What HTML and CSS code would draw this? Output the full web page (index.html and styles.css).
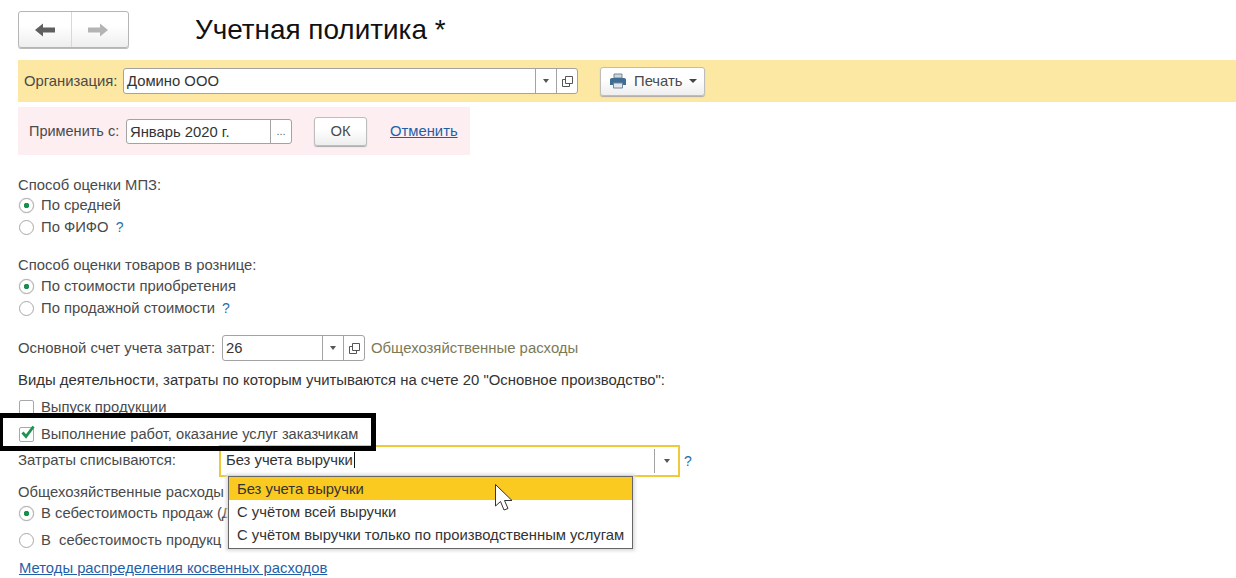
FILE: index.html
```html
<!DOCTYPE html>
<html lang="ru">
<head>
<meta charset="utf-8">
<title>Учетная политика</title>
<link rel="stylesheet" href="styles.css">
</head>
<body>
<div class="page">
  <header class="top">
    <div class="nav">
      <span class="nav-btn"><svg width="24" height="16" viewBox="0 0 24 16"><path d="M2 8 10 1.500V5.500H22V10.500H10V14.500Z" fill="#5f5f5f"/></svg></span>
      <span class="nav-btn next"><svg width="24" height="16" viewBox="0 0 24 16"><path d="M23 8 15 1.500V5.500H3V10.500H15V14.500Z" fill="#b4b4b4"/></svg></span>
    </div>
    <h1 class="title">Учетная политика *</h1>
  </header>

  <section class="org">
    <span class="org-label">Организация:</span>
    <div class="field org-field">
      <span class="value">Домино ООО</span>
      <span class="fbtn"><i class="caret"></i></span>
      <span class="fbtn"><svg width="11" height="11" viewBox="0 0 11 11"><path d="M3.500 .5H10.500V7.500H3.500Z M3.500 3.500H.5V10.500H7.500V7.500" fill="none" stroke="#555"/></svg></span>
    </div>
    <button class="print">
      <svg width="18" height="16" viewBox="0 0 18 16"><path d="M5 1h8v4H5z" fill="#cfd6dc" stroke="#7b8794"/><path d="M1 6.500Q1 5 3 5h12q2 0 2 1.500V12h-3v-2H4v2H1z" fill="#3f6d94"/><path d="M4.500 10h9v5h-9z" fill="#e4e8ec" stroke="#6f8aa0"/></svg>
      <span>Печать</span><i class="caret dark"></i>
    </button>
  </section>

  <section class="apply">
    <span class="apply-label">Применить с:</span>
    <div class="field date-field">
      <span class="value">Январь 2020 г.</span>
      <span class="fbtn dots">...</span>
    </div>
    <button class="ok">ОК</button>
    <a class="link cancel" href="#">Отменить</a>
  </section>

  <main class="form">
    <div class="row gap-20">Способ оценки МПЗ:</div>
    <div class="row"><i class="radio on"></i>По средней</div>
    <div class="row gap-2"><i class="radio"></i>По ФИФО<b class="help">?</b></div>

    <div class="row gap-18">Способ оценки товаров в рознице:</div>
    <div class="row gap-1"><i class="radio on"></i>По стоимости приобретения</div>
    <div class="row gap-2"><i class="radio"></i>По продажной стоимости<b class="help">?</b></div>

    <div class="row account">
      <span class="account-label">Основной счет учета затрат:</span>
      <div class="field account-field">
        <span class="value">26</span>
        <span class="fbtn"><i class="caret"></i></span>
        <span class="fbtn"><svg width="11" height="11" viewBox="0 0 11 11"><path d="M3.500 .5H10.500V7.500H3.500Z M3.500 3.500H.5V10.500H7.500V7.500" fill="none" stroke="#555"/></svg></span>
      </div>
      <span class="olive">Общехозяйственные расходы</span>
    </div>
    <div class="row gap-9 strong activity">Виды деятельности, затраты по которым учитываются на счете 20 "Основное производство":</div>
    <div class="row gap-7"><i class="check"></i>Выпуск продукции</div>
    <div class="row gap-7 works"><i class="check"><svg width="17" height="16" viewBox="0 0 17 16"><path d="M3.500 7.500 7 11.500 14.500 1.500" fill="none" stroke="#1f9254" stroke-width="2.800"/></svg></i>Выполнение работ, оказание услуг заказчикам</div>
    <div class="row costs">
      <span class="costs-label">Затраты списываются:</span>
      <div class="focus-field">
        <span class="value strong">Без учета выручки<i class="text-cursor"></i></span>
        <span class="focus-btn"><i class="caret"></i></span>
      </div>
      <b class="help">?</b>
    </div>
    <div class="row gap-5">Общехозяйственные расходы</div>
    <div class="row gap-1"><i class="radio on"></i>В себестоимость продаж (Д</div>
    <div class="row gap-7"><i class="radio"></i>В&nbsp; себестоимость продукц</div>
    <div class="row gap-8 methods"><a class="link" href="#">Методы распределения косвенных расходов</a></div>
  </main>

  <div class="highlight"></div>
  <ul class="dropdown">
    <li class="selected">Без учета выручки</li>
    <li>С учётом всей выручки</li>
    <li>С учётом выручки только по производственным услугам</li>
  </ul>
  <svg class="pointer" width="20" height="30" viewBox="0 0 20 30"><path d="M1.500 1.500V23L6.500 18.500 10 27 14 25.500 10.500 17.500H18Z" fill="#fff" stroke="#333" stroke-width="1"/></svg>
</div>
</body>
</html>
```
FILE: styles.css
```css
* { box-sizing: border-box; }
html, body { margin: 0; padding: 0; background: #fff; }
.page {
  position: relative;
  width: 1236px;
  height: 578px;
  overflow: hidden;
  font: 14.8px/20px "Liberation Sans", Arial, sans-serif;
  color: #4a4a4a;
}
.top { display: flex; align-items: center; height: 60px; padding: 0 0 2px 18px; }
.nav {
  display: flex;
  width: 111px;
  height: 37px;
  margin-top: 1px;
  border: 1px solid #b5b5b5;
  border-radius: 3px;
  background: linear-gradient(#fff 40%, #eeeeee);
  box-shadow: 0 1px 0 #bbb;
}
.nav-btn { flex: 1; display: flex; align-items: center; justify-content: center; }
.nav-btn.next { border-left: 1px solid #d8d8d8; padding-right: 5px; }
.title { margin: 2px 0 0 66px; font-size: 27.9px; font-weight: 400; line-height: 32px; color: #111; }
.org {
  display: flex;
  align-items: center;
  height: 42px;
  margin-left: 18px;
  padding-left: 6px;
  background: #fce8a2;
}
.org-label { width: 99px; }
.field {
  display: flex;
  align-items: stretch;
  background: #fff;
  border: 1px solid #a3a3a3;
  border-radius: 3px;
  color: #333;
}
.value { flex: 1; padding-left: 3px; line-height: 24px; white-space: nowrap; }
.fbtn {
  display: flex;
  align-items: center;
  justify-content: center;
  width: 21px;
  border-left: 1px solid #a3a3a3;
}
.org-field { width: 455px; height: 26px; }
.caret {
  display: block;
  width: 0;
  height: 0;
  border: 3px solid transparent;
  border-top: 4px solid #555;
  border-bottom: 0;
}
.caret.dark { border-width: 4px 4px 0; border-top-color: #444; }
.print {
  display: flex;
  align-items: center;
  gap: 7px;
  width: 105px;
  height: 29px;
  margin-left: 22px;
  padding: 0 0 0 8px;
  border: 1px solid #bdbdbd;
  border-radius: 3px;
  background: linear-gradient(#fff 40%, #eee);
  box-shadow: 0 1px 1px #aaa;
  font: inherit;
  color: #4a4a4a;
}
.apply {
  display: flex;
  align-items: center;
  width: 452px;
  height: 48px;
  margin: 5px 0 0 18px;
  padding-left: 11px;
  background: #fdeef1;
}
.apply-label { width: 97px; font-size: 14.5px; }
.date-field { width: 166px; height: 25px; }
.date-field .fbtn { width: 21px; }
.dots { font-size: 11px; color: #666; }
.ok {
  width: 53px;
  height: 29px;
  margin-left: 22px;
  padding: 0;
  border: 1px solid #bdbdbd;
  border-radius: 3px;
  background: linear-gradient(#fff 40%, #eee);
  box-shadow: 0 1px 1px #aaa;
  font: inherit;
  color: #4a4a4a;
}
.link { color: #1f5fa8; text-decoration: underline; }
.cancel { margin-left: 23px; }
.form { padding-left: 18px; }
.row { display: flex; align-items: center; height: 20px; white-space: nowrap; }
.gap-1 { margin-top: 1px; }
.gap-2 { margin-top: 2px; }
.gap-5 { margin-top: 5px; }
.gap-7 { margin-top: 7px; }
.gap-8 { margin-top: 8px; }
.gap-9 { margin-top: 9px; }
.gap-18 { margin-top: 18px; }
.gap-20 { margin-top: 20px; }
.strong { color: #333; }
.activity { font-size: 14.9px; }
.works { font-size: 14.65px; }
.methods { padding-left: 1px; }
.radio {
  flex: none;
  position: relative;
  width: 15px;
  height: 15px;
  margin: 0 7px 0 1px;
  border: 1px solid #a8a8a8;
  border-radius: 50%;
  background: #fff;
}
.radio.on { background: radial-gradient(circle, #1a8f4f 0 2.500px, #fff 3px); box-shadow: 0 0 1px #aaa; }
.check {
  flex: none;
  position: relative;
  width: 15px;
  height: 15px;
  margin: 0 7px 0 1px;
  border: 1px solid #a8a8a8;
  border-radius: 2px;
  background: #fff;
}
.check svg { position: absolute; left: -1px; top: -3px; }
.help { margin-left: 7px; color: #1f6fa8; font-weight: 400; font-size: 14px; }
.account { height: 26px; margin-top: 17px; }
.account-label { width: 204px; font-size: 14.9px; }
.account-field { width: 143px; height: 26px; }
.olive { margin-left: 6px; color: #7c7a55; font-size: 14.9px; }
.costs { height: 32px; margin-top: 1px; }
.costs-label { width: 201px; padding-bottom: 2px; font-size: 15px; }
.focus-field {
  display: flex;
  width: 461px;
  height: 32px;
  border: 2px solid #f0c93a;
  background: #fff;
  color: #333;
}
.focus-field .value { line-height: 26px; padding-left: 5px; }
.focus-btn {
  display: flex;
  align-items: center;
  justify-content: center;
  width: 24px;
  margin: 2px 0;
  border-left: 1px solid #a3a3a3;
}
.text-cursor {
  display: inline-block;
  width: 1px;
  height: 16px;
  margin-left: 1px;
  vertical-align: -3px;
  background: #111;
}
.costs .help { margin-left: 4px; }
.highlight {
  position: absolute;
  left: -2px;
  top: 413px;
  width: 378px;
  height: 38px;
  border: 5px solid #000;
  pointer-events: none;
}
.dropdown {
  position: absolute;
  left: 228px;
  top: 476px;
  width: 405px;
  margin: 0;
  padding: 0 0 2px;
  list-style: none;
  background: #fff;
  border: 1px solid #666;
  box-shadow: 0 0 3px 2px #ddd;
  color: #333;
}
.dropdown li { height: 23px; padding-left: 8px; line-height: 25px; white-space: nowrap; }
.dropdown .selected { background: #fbca20; }
.pointer { position: absolute; left: 494px; top: 483px; }
```
